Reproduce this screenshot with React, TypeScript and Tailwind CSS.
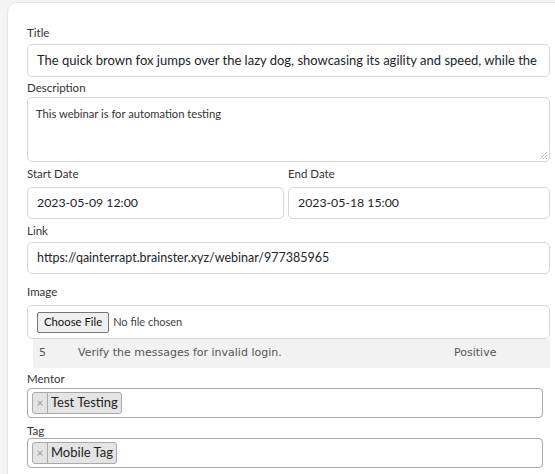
import React from "react";

const font = { fontFamily: 'Lato, "Noto Sans", sans-serif' };

const Label: React.FC<{ text: string; className?: string }> = ({ text, className }) => (
  <div className={"h-[14px] text-[11.5px] leading-[14px] text-[#333] " + (className ?? "")}>{text}</div>
);

const Chip: React.FC<{ text: string }> = ({ text }) => (
  <div className="flex items-stretch h-[22px] bg-[#e4e4e4] border border-[#aaa] rounded-[3px]">
    <span className="flex items-center justify-center w-[15px] text-[12px] text-[#999] border-r border-[#aaa]">
      ×
    </span>
    <span className="flex items-center px-[3px] text-[13px] text-[#222]">{text}</span>
  </div>
);

const inputCls =
  "border border-[#d6d6de] rounded-[5px] flex items-center px-[9px] overflow-hidden whitespace-nowrap text-[#212529]";

export default function App() {
  return (
    <div className="w-[555px] h-[474px] bg-[#f4f4f6] overflow-hidden" style={font}>
      <div className="ml-[7px] mt-[2px] w-[600px] h-[520px] bg-white border border-[#e6e6ea] rounded-tl-[10px] pl-[19px] pt-[23px]">
        <div className="w-[523px]">
          <Label text="Title" className="mb-[4px]" />
          <div className={"h-[33px] text-[13px] " + inputCls}>
            The quick brown fox jumps over the lazy dog, showcasing its agility and speed, while the
          </div>

          <Label text="Description" className="mt-[4px] mb-[2px]" />
          <div className="relative h-[65px] border border-[#d6d6de] rounded-[5px] px-[8px] pt-[9px] text-[11.2px] leading-[14px] text-[#333]">
            This webinar is for automation testing
            <svg className="absolute right-[1px] bottom-[1px]" width="10" height="10" viewBox="0 0 10 10">
              <path d="M9 2 L2 9 M9 5 L5 9 M9 8 L8 9" stroke="#888" strokeWidth="1" strokeDasharray="1 1" />
            </svg>
          </div>

          <div className="mt-[5px] flex gap-[4px]">
            <div className="w-[257px]">
              <Label text="Start Date" className="mb-[6px]" />
              <div className={"h-[32px] text-[12.3px] " + inputCls}>2023-05-09 12:00</div>
            </div>
            <div className="flex-1">
              <Label text="End Date" className="mb-[6px]" />
              <div className={"h-[32px] text-[12.3px] " + inputCls}>2023-05-18 15:00</div>
            </div>
          </div>

          <Label text="Link" className="mt-[5px] mb-[4px]" />
          <div className={"h-[32px] text-[12.5px] " + inputCls}>
            https://qainterrapt.brainster.xyz/webinar/977385965
          </div>

          <Label text="Image" className="mt-[11px] mb-[6px]" />
          <div className="h-[34px] border border-[#d6d6de] rounded-[5px] flex items-center px-[9px] gap-[4px]">
            <div className="h-[21px] px-[6px] flex items-center bg-[#efefef] border border-[#767676] rounded-[2px] text-[11.3px] text-[#111]">
              Choose File
            </div>
            <span className="text-[11px] text-[#444]">No file chosen</span>
          </div>
        </div>

        <div
          className="ml-[6px] w-[517px] h-[29px] bg-[#f2f2f2] flex items-center text-[11px] text-[#555]"
          style={{ fontFamily: '"DejaVu Sans", Verdana, sans-serif' }}
        >
          <span className="w-[45px] pl-[6px]">5</span>
          <span className="flex-1">Verify the messages for invalid login.</span>
          <span className="w-[96px]">Positive</span>
        </div>

        <div className="w-[516px]">
          <Label text="Mentor" className="mt-[4px] mb-[2px]" />
          <div className="h-[30px] border border-[#aaa] rounded-[4px] flex items-center px-[4px]">
            <Chip text="Test Testing" />
          </div>
          <Label text="Tag" className="mt-[6px]" />
          <div className="h-[30px] border border-[#aaa] rounded-[4px] flex items-center px-[4px]">
            <Chip text="Mobile Tag" />
          </div>
        </div>
      </div>
    </div>
  );
}
